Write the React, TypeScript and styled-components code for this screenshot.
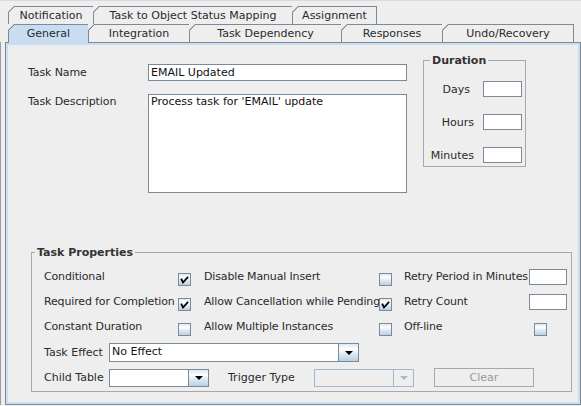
import React from "react";
import styled, { createGlobalStyle } from "styled-components";

const LINE = "#7a8a99";
const SEL = "#c8ddf2";
const BG = "#eeeeee";
const OCEAN = "linear-gradient(to bottom, #dde8f3 0%, #ffffff 30%, #dde8f3 60%, #b8cfe5 100%)";

const GlobalStyle = createGlobalStyle`
  html, body {
    margin: 0;
    background: ${BG};
    font-family: "DejaVu Sans", "Liberation Sans", sans-serif;
    font-size: 11px;
    color: #2a2a2a;
  }
  * { box-sizing: border-box; }
`;

const Window = styled.div`
  width: 581px;
  height: 406px;
  padding-top: 5px;
  overflow: hidden;
  border-top: 1px solid #dadada;
`;

const TabRow = styled.div<{ $offset: number }>`
  display: flex;
  height: 18px;
  padding-left: ${(p) => p.$offset}px;
`;

const Tab = styled.div<{ $w: number; $active?: boolean }>`
  position: relative;
  z-index: ${(p) => (p.$active ? 2 : 1)};
  width: ${(p) => p.$w}px;
  height: ${(p) => (p.$active ? 19 : 18)}px;
  flex: none;
  border-top: 1px solid ${LINE};
  border-left: 1px solid ${LINE};
  background: linear-gradient(
      135deg,
      transparent 0 4.2px,
      ${LINE} 4.2px 5.2px,
      ${(p) => (p.$active ? SEL : BG)} 5.2px
    )
    border-box;
  clip-path: polygon(0 6px, 6px 0, 100% 0, 100% 100%, 0 100%);
  text-align: center;
  line-height: 17px;
  white-space: nowrap;

  &:last-child {
    border-right: 1px solid ${LINE};
  }
`;

const Well = styled.div`
  border-left: 1px solid #9c9c9c;
  height: 363px;
`;

const Panel = styled.div`
  margin-left: 4px;
  width: 576px;
  height: 363px;
  border: 1px solid ${LINE};
  box-shadow: inset 0 0 0 2px ${SEL};
  padding: 2px;
  display: flex;
  flex-direction: column;
`;

const TopSection = styled.div`
  display: flex;
  align-items: flex-start;
  padding: 9px 0 0 20px;
`;

const MainForm = styled.div`
  display: grid;
  grid-template-columns: 120px 259px;
  grid-template-rows: 17px 99px;
  row-gap: 13px;
  margin-top: 10px;
`;

const Label = styled.span<{ $top?: boolean }>`
  align-self: ${(p) => (p.$top ? "start" : "center")};
  padding-top: ${(p) => (p.$top ? 1 : 0)}px;
  white-space: nowrap;
  line-height: 13px;
  letter-spacing: -0.1px;
`;

const TextField = styled.div<{ $w?: number; $h?: number }>`
  width: ${(p) => (p.$w ? `${p.$w}px` : "auto")};
  height: ${(p) => p.$h ?? 17}px;
  background: #fff;
  border: 1px solid ${LINE};
  padding: 0 2px;
  line-height: 15px;
  white-space: nowrap;
  color: #111;
`;

const TextArea = styled(TextField)`
  height: 99px;
  line-height: 14px;
`;

const Group = styled.fieldset`
  margin: 0;
  padding: 0;
  border: 1px solid #a9a9a9;
  min-width: 0;
`;

const Legend = styled.legend`
  margin-left: 6px;
  padding: 0 2px;
  font-weight: bold;
  font-size: 11px;
  line-height: 13px;
  color: #333;
`;

const DurationGroup = styled(Group)`
  width: 103px;
  margin-left: 16px;
`;

const DurationGrid = styled.div`
  display: grid;
  grid-template-columns: 1fr 39px;
  grid-auto-rows: 16px;
  column-gap: 9px;
  row-gap: 17px;
  align-items: center;
  padding: 14px 3px 3px 0;
`;

const DurLabel = styled.span<{ $pad?: number }>`
  text-align: right;
  padding-right: ${(p) => p.$pad ?? 0}px;
  line-height: 13px;
`;

const PropsGroup = styled(Group)`
  margin: auto 6px 10px 23px;
`;

const PropsLegend = styled(Legend)`
  margin-left: 3px;
`;

const PropsBody = styled.div`
  padding: 5px 0 4px 12px;
  display: flex;
  flex-direction: column;
`;

const FlagGrid = styled.div`
  display: grid;
  grid-template-columns: 134px 13px 13px 175px 13px 12px 125px 38px;
  grid-auto-rows: 25px;
  align-items: center;
  white-space: nowrap;
`;

const FlagLabel = styled.span<{ $col: number }>`
  grid-column: ${(p) => p.$col};
  line-height: 13px;
  letter-spacing: -0.15px;
`;

const Box = styled.span<{ $col: number; $shift?: number }>`
  grid-column: ${(p) => p.$col};
  align-self: start;
  margin-top: 9px;
  margin-left: ${(p) => p.$shift ?? 0}px;
  width: 13px;
  height: 13px;
  border: 1px solid ${LINE};
  background: ${OCEAN};
  display: block;
  position: relative;
`;

const SmallField = styled(TextField)<{ $col: number }>`
  grid-column: ${(p) => p.$col};
  height: 16px;
`;

const ComboRow = styled.div<{ $gap: number }>`
  display: flex;
  align-items: center;
  height: 19px;
  margin-top: ${(p) => p.$gap}px;
  white-space: nowrap;
`;

const ComboLabel = styled.span<{ $w: number; $ml?: number }>`
  width: ${(p) => p.$w}px;
  margin-left: ${(p) => p.$ml ?? 0}px;
  flex: none;
  line-height: 13px;
`;

const Combo = styled.div<{ $w: number; $h?: number; $disabled?: boolean }>`
  display: flex;
  width: ${(p) => p.$w}px;
  height: ${(p) => p.$h ?? 18}px;
  flex: none;
  border: 1px solid ${(p) => (p.$disabled ? "#a3b8cc" : LINE)};
  background: ${(p) => (p.$disabled ? BG : "#fff")};
`;

const ComboText = styled.span`
  flex: 1;
  padding-left: 2px;
  line-height: 16px;
  color: #111;
`;

const ArrowButton = styled.span<{ $disabled?: boolean }>`
  width: 20px;
  flex: none;
  border-left: 1px solid ${(p) => (p.$disabled ? "#a3b8cc" : LINE)};
  background: ${(p) => (p.$disabled ? BG : OCEAN)};
  display: flex;
  align-items: center;
  justify-content: center;

  &::after {
    content: "";
    border-left: 4px solid transparent;
    border-right: 4px solid transparent;
    border-top: 4px solid ${(p) => (p.$disabled ? "#a3b8cc" : "#000")};
    margin-top: 1px;
  }
`;

const ClearButton = styled.div`
  width: 100px;
  height: 19px;
  margin-left: 20px;
  flex: none;
  border: 1px solid #a8a8a8;
  background: ${BG};
  color: #9a9a9a;
  text-align: center;
  line-height: 17px;
`;

const Check = ({ col, checked, shift }: { col: number; checked?: boolean; shift?: number }) => (
  <Box $col={col} $shift={shift}>
    {checked && (
      <svg width="11" height="11" viewBox="0 0 11 11" style={{ position: "absolute", left: 0, top: 0 }}>
        <path d="M2.5 5.5 L4 8.5 L8.5 3.5" stroke="#000" strokeWidth="1.8" fill="none" strokeLinecap="square" />
      </svg>
    )}
  </Box>
);

export default function App() {
  return (
    <Window>
      <GlobalStyle />
      <TabRow $offset={8}>
        <Tab $w={85}>Notification</Tab>
        <Tab $w={199}>Task to Object Status Mapping</Tab>
        <Tab $w={85}>Assignment</Tab>
      </TabRow>
      <TabRow $offset={8}>
        <Tab $w={80} $active>
          General
        </Tab>
        <Tab $w={101}>Integration</Tab>
        <Tab $w={152}>Task Dependency</Tab>
        <Tab $w={101}>Responses</Tab>
        <Tab $w={132}>Undo/Recovery</Tab>
      </TabRow>
      <Well>
        <Panel>
          <TopSection>
            <MainForm>
              <Label>Task Name</Label>
              <TextField>EMAIL Updated</TextField>
              <Label $top>Task Description</Label>
              <TextArea>Process task for 'EMAIL' update</TextArea>
            </MainForm>
            <DurationGroup>
              <Legend>Duration</Legend>
              <DurationGrid>
                <DurLabel $pad={4}>Days</DurLabel>
                <TextField $h={16} />
                <DurLabel>Hours</DurLabel>
                <TextField $h={16} />
                <DurLabel>Minutes</DurLabel>
                <TextField $h={16} />
              </DurationGrid>
            </DurationGroup>
          </TopSection>

          <PropsGroup>
            <PropsLegend>Task Properties</PropsLegend>
            <PropsBody>
              <FlagGrid>
                <FlagLabel $col={1}>Conditional</FlagLabel>
                <Check col={2} checked />
                <FlagLabel $col={4}>Disable Manual Insert</FlagLabel>
                <Check col={5} />
                <FlagLabel $col={7}>Retry Period in Minutes</FlagLabel>
                <SmallField $col={8} />

                <FlagLabel $col={1}>Required for Completion</FlagLabel>
                <Check col={2} checked />
                <FlagLabel $col={4}>Allow Cancellation while Pending</FlagLabel>
                <Check col={5} checked />
                <FlagLabel $col={7}>Retry Count</FlagLabel>
                <SmallField $col={8} />

                <FlagLabel $col={1}>Constant Duration</FlagLabel>
                <Check col={2} />
                <FlagLabel $col={4}>Allow Multiple Instances</FlagLabel>
                <Check col={5} />
                <FlagLabel $col={7}>Off-line</FlagLabel>
                <Check col={8} shift={5} />
              </FlagGrid>

              <ComboRow $gap={4}>
                <ComboLabel $w={65}>Task Effect</ComboLabel>
                <Combo $w={250} $h={19}>
                  <ComboText>No Effect</ComboText>
                  <ArrowButton />
                </Combo>
              </ComboRow>
              <ComboRow $gap={6}>
                <ComboLabel $w={65}>Child Table</ComboLabel>
                <Combo $w={100}>
                  <ComboText />
                  <ArrowButton />
                </Combo>
                <ComboLabel $w={86} $ml={19}>
                  Trigger Type
                </ComboLabel>
                <Combo $w={100} $disabled>
                  <ComboText />
                  <ArrowButton $disabled />
                </Combo>
                <ClearButton>Clear</ClearButton>
              </ComboRow>
            </PropsBody>
          </PropsGroup>
        </Panel>
      </Well>
    </Window>
  );
}
